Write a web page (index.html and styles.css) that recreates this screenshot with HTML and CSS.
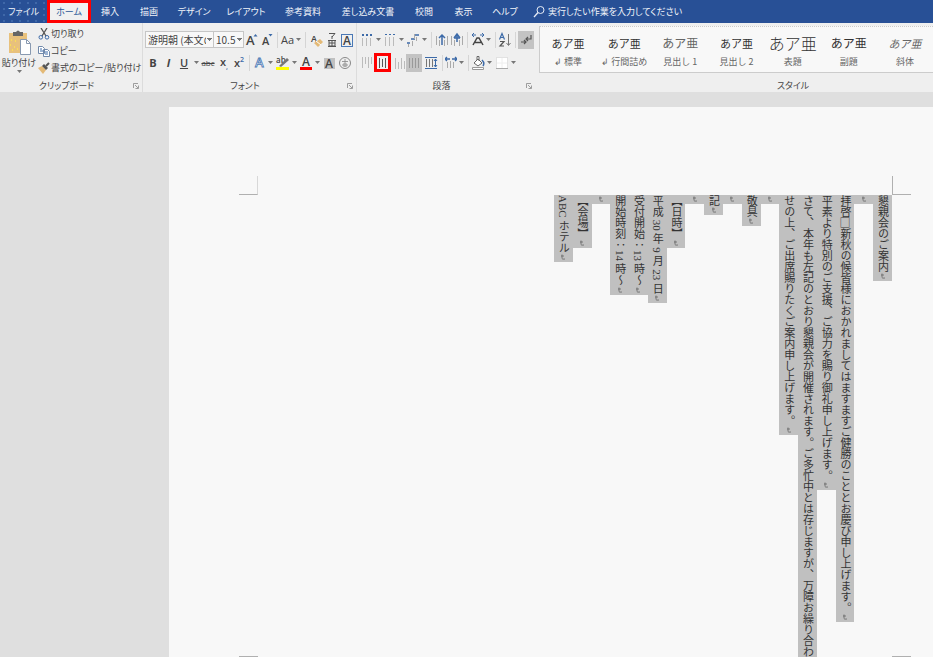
FILE: index.html
```html
<!DOCTYPE html>
<html lang="ja">
<head>
<meta charset="utf-8">
<title>懇親会のご案内</title>
<link rel="stylesheet" href="styles.css">
</head>
<body>
<svg class="defs" aria-hidden="true">
  <symbol id="arrow" viewBox="0 0 5 3"><path d="M0 0h5L2.500 3z" fill="#777"/></symbol>
  <symbol id="mark" viewBox="0 0 18 9"><path d="M7 3h3M8 1.500v4q0 1 3 .5" fill="none" stroke="#666" stroke-width=".8"/></symbol>
  <symbol id="launch" viewBox="0 0 6 6"><path d="M.5 5V.5H5M2 2l3 3M5.500 2.500v3h-3" fill="none" stroke="#888" stroke-width=".8"/></symbol>
</svg>

<nav class="tabs">
  <button class="tab file">ファイル</button>
  <button class="tab active">ホーム</button>
  <button class="tab">挿入</button>
  <button class="tab">描画</button>
  <button class="tab">デザイン</button>
  <button class="tab">レイアウト</button>
  <button class="tab">参考資料</button>
  <button class="tab">差し込み文書</button>
  <button class="tab">校閲</button>
  <button class="tab">表示</button>
  <button class="tab">ヘルプ</button>
  <button class="tab search"><svg width="14" height="14" viewBox="0 0 14 14"><circle cx="8.500" cy="5" r="3.500" fill="none" stroke="#e6ecf6"/><path d="M6 7.500L2 12" stroke="#e6ecf6" stroke-width="1.300"/></svg>実行したい作業を入力してください</button>
</nav>

<div class="ribbon">
  <section class="group clipboard">
    <div class="tools">
      <button class="paste">
        <svg width="26" height="26" viewBox="-2 0 26 26"><path d="M1 3h18v20H1z" fill="#e8c17c"/><path d="M5 2h3q2-3 4 0h3v4H5z" fill="#666"/><path d="M3 10h1M7 11h1M2 15h1M6 17h1M4 20h1M9 19h1" stroke="#ffe94a" stroke-width="1.500"/><path d="M12.500 9.500h6l4 4v11h-10z" fill="#fff" stroke="#8899b0"/><path d="M18.500 9.500v4h4" fill="none" stroke="#8899b0"/></svg>
        <span>貼り付け</span>
        <svg class="down"><use href="#arrow"/></svg>
      </button>
      <div class="clips">
        <button><svg width="12" height="12" viewBox="0 0 12 12"><path d="M3 0l5 8M9 0L4 8" stroke="#555" stroke-width="1.300"/><circle cx="2.800" cy="9.300" r="1.800" fill="none" stroke="#3c6aa8"/><circle cx="9" cy="9.300" r="1.800" fill="none" stroke="#3c6aa8"/></svg>切り取り</button>
        <button><svg width="12" height="12" viewBox="0 0 12 12"><path d="M.5 1.500h4l2 2v5h-6zM5.500 4.500h4l2 2v5h-6z" fill="#fff" stroke="#7189aa"/><path d="M2 4h2M2 6h3M7 7h3M7 9h3" stroke="#3c6aa8"/></svg>コピー</button>
        <button><svg width="12" height="12" viewBox="0 0 12 12"><path d="M0 6l4-2 4 4-3 4z" fill="#e3b976"/><path d="M4 4l2-2 4 4-2 2z" fill="#555"/><path d="M8 4l3-3" stroke="#555" stroke-width="2"/></svg>書式のコピー/貼り付け</button>
      </div>
    </div>
    <footer><span>クリップボード</span><svg class="launch"><use href="#launch"/></svg></footer>
  </section>

  <section class="group font">
    <div class="tools rows">
      <div class="row font-one">
        <select aria-label="フォント"><option>游明朝 (本文のフォント)</option></select>
        <select class="size" aria-label="フォント サイズ"><option>10.5</option></select>
        <button aria-label="拡大"><svg width="14" height="16" viewBox="0 0 14 16"><text x="1" y="13" class="g13">A</text><path d="M8.500 4.500l2-2.500 2 2.500z" fill="#3c6aa8"/></svg></button>
        <button aria-label="縮小"><svg width="14" height="16" viewBox="0 0 14 16"><text x="2" y="13" class="g11">A</text><path d="M8.500 2h4l-2 2.500z" fill="#3c6aa8"/></svg></button>
        <i class="sep"></i>
        <button><span class="aa">Aa</span><svg class="down"><use href="#arrow"/></svg></button>
        <i class="sep"></i>
        <button aria-label="書式のクリア"><svg width="14" height="16" viewBox="0 0 14 16"><text x="1" y="10" class="g9">A</text><path d="M4 11l4 4 5-5-3-3z" fill="#e3b976"/><path d="M6 9l5 4" stroke="#fff"/></svg></button>
        <button aria-label="ルビ"><svg width="14" height="16" viewBox="0 0 14 16"><path d="M4 1.500h6L7 5M7 4v3M3 8.500h8M4 8v6h6V8M4 11h6M3 14.500h8M7 8v6" fill="none" stroke="#555"/></svg></button>
        <button aria-label="囲み線"><svg width="14" height="16" viewBox="0 0 14 16"><rect x="1.500" y="2.500" width="11" height="12" fill="none" stroke="#4a78b5"/><text x="3" y="13" class="g12">A</text></svg></button>
      </div>
      <div class="row font-two">
        <button><b>B</b></button>
        <button><b><em>I</em></b></button>
        <button><u>U</u></button>
        <button aria-label="下線の種類"><svg class="down"><use href="#arrow"/></svg></button>
        <button><s>abc</s></button>
        <button><span class="script">x<sub>,</sub></span></button>
        <button><span class="script">x<sup>2</sup></span></button>
        <i class="sep"></i>
        <button aria-label="文字の効果"><svg width="14" height="16" viewBox="0 0 14 16"><text x="2" y="12" class="outline">A</text></svg></button>
        <button aria-label="効果一覧"><svg class="down"><use href="#arrow"/></svg></button>
        <button aria-label="蛍光ペン"><svg width="15" height="16" viewBox="0 0 15 16"><text x="1" y="8" class="g8">ab</text><path d="M4 11l8-8 2 2-8 7z" fill="#777"/><path d="M1 12h13v3H1z" fill="#ff0"/></svg></button>
        <button aria-label="蛍光ペンの色"><svg class="down"><use href="#arrow"/></svg></button>
        <button aria-label="文字の色"><svg width="14" height="16" viewBox="0 0 14 16"><text x="3" y="11" class="g12">A</text><path d="M1 12h12v3H1z" fill="red"/></svg></button>
        <button aria-label="色一覧"><svg class="down"><use href="#arrow"/></svg></button>
        <button aria-label="網かけ"><svg width="14" height="16" viewBox="0 0 14 16"><path d="M2 3h11v11H2z" fill="#c0c0c0"/><text x="3" y="13" class="g12">A</text></svg></button>
        <button aria-label="囲い文字"><svg width="14" height="16" viewBox="0 0 14 16"><circle cx="7" cy="8" r="5.500" fill="none" stroke="#888"/><path d="M4 6.500h6M7 4v8M5 9h4v2H5z" fill="none" stroke="#888" stroke-width=".8"/></svg></button>
      </div>
    </div>
    <footer><span>フォント</span><svg class="launch"><use href="#launch"/></svg></footer>
  </section>

  <section class="group para">
    <div class="tools rows">
      <div class="row para-one">
        <button aria-label="箇条書き"><svg width="14" height="16" viewBox="0 0 14 16"><path d="M2 3h2M6 3h2M10 3h2" stroke="#3c6aa8" stroke-width="2"/><path d="M2.500 6v8M6.500 6v8M10.500 6v8" stroke="#bbb"/></svg></button>
        <button aria-label="行頭文字"><svg class="down"><use href="#arrow"/></svg></button>
        <button aria-label="段落番号"><svg width="14" height="16" viewBox="0 0 14 16"><path d="M2 2.500h2M6 2.500h2M10 2.500h2" stroke="#3c6aa8"/><path d="M2.500 5v9M6.500 5v9M10.500 5v9" stroke="#bbb"/></svg></button>
        <button aria-label="番号書式"><svg class="down"><use href="#arrow"/></svg></button>
        <button aria-label="リスト"><svg width="14" height="16" viewBox="0 0 14 16"><path d="M9 3h4M5 7h4M1 11h3" stroke="#3c6aa8" stroke-width="1.500"/><path d="M10.500 5v4M6.500 9v5M2.500 12v3M8.500 2v5" stroke="#aaa"/></svg></button>
        <button aria-label="リスト書式"><svg class="down"><use href="#arrow"/></svg></button>
        <i class="sep"></i>
        <button aria-label="インデントを減らす"><svg width="14" height="16" viewBox="0 0 14 16"><path d="M1.500 4v9M4.500 8v6M9.500 8v6M12.500 4v9" stroke="#aaa"/><path d="M7 13V4M4 6l3-3 3 3" stroke="#3c6aa8" stroke-width="1.500" fill="none"/></svg></button>
        <button aria-label="インデントを増やす"><svg width="14" height="16" viewBox="0 0 14 16"><path d="M1.500 4v9M4.500 8v6M9.500 8v6M12.500 4v9" stroke="#aaa"/><path d="M7 2v8M4 6l3-4 3 4M4 6h6" stroke="#3c6aa8" stroke-width="1.500" fill="none"/></svg></button>
        <i class="sep"></i>
        <button aria-label="拡張書式"><svg width="14" height="16" viewBox="0 0 14 16"><path d="M1 3h4M9 3h4M3 1L1 3l2 2M11 1l2 2-2 2" fill="none" stroke="#3c6aa8"/><path d="M2 13l4-7h2l4 7M4 10.500h6" stroke="#444" stroke-width="1.500" fill="none"/></svg></button>
        <button aria-label="拡張書式一覧"><svg class="down"><use href="#arrow"/></svg></button>
        <i class="sep"></i>
        <button aria-label="並べ替え"><svg width="14" height="16" viewBox="0 0 14 16"><path d="M1.500 7.500L4 1.500l2.500 6M2.500 5.500h3" fill="none" stroke="#3c6aa8" stroke-width="1.200"/><path d="M2 9.500h4l-4 4.500h4" fill="none" stroke="#555" stroke-width="1.200"/><path d="M10.500 2v11M8.500 11l2 2.500 2-2.500" fill="none" stroke="#777"/></svg></button>
        <i class="sep"></i>
        <button class="pressed" aria-label="編集記号"><svg width="14" height="16" viewBox="0 0 14 16"><path d="M12 3v4H7M9 5L7 7l2 2M2 10h5M5 8l2 2-2 2" fill="none" stroke="#555" stroke-width="1.200"/></svg></button>
      </div>
      <div class="row para-two">
        <button aria-label="上揃え"><svg width="14" height="16" viewBox="0 0 14 16"><path d="M2.500 2v11M5.500 2v7M8.500 2v11M11.500 2v7" stroke="#bbb"/></svg></button>
        <button class="boxed" aria-label="上下中央揃え"><svg width="11" height="16" viewBox="0 0 11 16"><path d="M2.500 3v10M5.500 4v8M8.500 3v10" stroke="#555"/></svg></button>
        <button aria-label="下揃え"><svg width="14" height="16" viewBox="0 0 14 16"><path d="M3.500 3v11M6.500 7v7M9.500 3v11M12.500 6v8" stroke="#bbb"/></svg></button>
        <button class="pressed" aria-label="両端揃え"><svg width="14" height="16" viewBox="0 0 14 16"><path d="M2.500 3v10M5.500 3v10M8.500 3v10M11.500 3v10" stroke="#999"/></svg></button>
        <button aria-label="均等割り付け"><svg width="14" height="16" viewBox="0 0 14 16"><path d="M1 2.500h12M1 13.500h12M11.500 4v8" stroke="#3c6aa8"/><path d="M2.500 4v8M5.500 4v8M8.500 4v8" stroke="#777"/><path d="M10 6l1.500-2L13 6M10 10l1.500 2 1.500-2" fill="none" stroke="#3c6aa8"/></svg></button>
        <i class="sep"></i>
        <button aria-label="行間"><svg width="12" height="16" viewBox="0 0 12 16"><path d="M0 4h5M7 4h5M2 2L0 4l2 2M10 2l2 2-2 2" fill="none" stroke="#3c6aa8" stroke-width="1.300"/><path d="M2.500 7v6M5.500 6v7M8.500 7v6" stroke="#aaa"/></svg></button>
        <button aria-label="行間一覧"><svg class="down"><use href="#arrow"/></svg></button>
        <i class="sep"></i>
        <button aria-label="塗りつぶし"><svg width="14" height="16" viewBox="0 0 14 16"><path d="M3 8l4-4 4 4-4 3zM6 5V1.500h2V6" fill="#fff" stroke="#666"/><path d="M11 5q3 3 1 6" stroke="#3c6aa8" stroke-width="1.500" fill="none"/><path d="M1.500 12.500h11v2h-11z" fill="#fff" stroke="#999"/></svg></button>
        <button aria-label="塗りつぶしの色"><svg class="down"><use href="#arrow"/></svg></button>
        <button aria-label="罫線"><svg width="14" height="16" viewBox="0 0 14 16"><path d="M1.500 2.500h11v11h-11z" fill="#fff" stroke="#ccc" stroke-dasharray="1 1"/><path d="M7 3v10M2 8h10" stroke="#eee"/><path d="M1 13.500h12" stroke="#aaa"/></svg></button>
        <button aria-label="罫線一覧"><svg class="down"><use href="#arrow"/></svg></button>
      </div>
    </div>
    <footer><span>段落</span><svg class="launch"><use href="#launch"/></svg></footer>
  </section>

  <section class="group styles">
    <div class="gallery">
      <button><span class="sample">あア亜</span><small>↲ 標準</small></button>
      <button><span class="sample">あア亜</span><small>↲ 行間詰め</small></button>
      <button><span class="sample head">あア亜</span><small>見出し 1</small></button>
      <button><span class="sample">あア亜</span><small>見出し 2</small></button>
      <button><span class="sample title">あア亜</span><small>表題</small></button>
      <button><span class="sample sub">あア亜</span><small>副題</small></button>
      <button><span class="sample slant">あア亜</span><small>斜体</small></button>
    </div>
    <footer><span>スタイル</span></footer>
  </section>
</div>

<main class="workspace">
  <article class="page">
    <div class="crops top"><i></i><i></i></div>
    <div class="text">
      <p>懇親会のご案内<svg class="mark"><use href="#mark"/></svg></p>
      <p><svg class="mark"><use href="#mark"/></svg></p>
      <p>拝啓<span class="space">□</span>新秋の候皆様におかれましてはますますご健勝のこととお慶び申し上げます。<svg class="mark"><use href="#mark"/></svg></p>
      <p>平素より特別のご支援、ご協力を賜り御礼申し上げます。<svg class="mark"><use href="#mark"/></svg></p>
      <p>さて、本年も左記のとおり懇親会が開催されます。ご多忙中とは存じますが、万障お繰り合わ</p>
      <p>せの上、ご出席賜りたくご案内申し上げます。<svg class="mark"><use href="#mark"/></svg></p>
      <p><svg class="mark"><use href="#mark"/></svg></p>
      <p>敬具<svg class="mark"><use href="#mark"/></svg></p>
      <p><svg class="mark"><use href="#mark"/></svg></p>
      <p>記<svg class="mark"><use href="#mark"/></svg></p>
      <p><svg class="mark"><use href="#mark"/></svg></p>
      <p>【日時】<svg class="mark"><use href="#mark"/></svg></p>
      <p>平成 30 年 9 月 23 日<svg class="mark"><use href="#mark"/></svg></p>
      <p>受付開始：13 時～<svg class="mark"><use href="#mark"/></svg></p>
      <p>開始時刻：14 時～<svg class="mark"><use href="#mark"/></svg></p>
      <p><svg class="mark"><use href="#mark"/></svg></p>
      <p>【会場】<svg class="mark"><use href="#mark"/></svg></p>
      <p>ABC ホテル<svg class="mark"><use href="#mark"/></svg></p>
    </div>
    <div class="crops bottom"><i></i><i></i></div>
  </article>
</main>
</body>
</html>
```
FILE: styles.css
```css
* { box-sizing: border-box; }

body {
  margin: 0;
  height: 100vh;
  overflow: hidden;
  display: flex;
  flex-direction: column;
  background: #dfdfdf;
  color: #444;
  font: 9px/12px "Noto Sans CJK JP", sans-serif;
  font-feature-settings: "palt";
}

.defs { display: none; }

button {
  margin: 0;
  padding: 0;
  border: 0;
  background: none;
  color: inherit;
  font: inherit;
  font-feature-settings: inherit;
  display: flex;
  align-items: center;
  justify-content: center;
  white-space: nowrap;
}

svg { flex: none; }
.down { width: 5px; height: 3px; }

/* Tab strip */
.tabs {
  flex: none;
  height: 23px;
  display: grid;
  grid-template-columns: 47px 44px 38px 40px 50px 54px 60px 70px 42px 37px 46px 1fr;
  background: #285096;
  color: #f2f5fa;
}
.file {
  background-image: radial-gradient(#3f68a9 1px, transparent 1px);
  background-size: 8px 6px;
}
.active {
  border: 3px solid red;
  background: #f0f0f0;
  color: #2b5797;
}
.search {
  justify-content: flex-start;
  gap: 2px;
  padding-left: 4px;
}

/* Ribbon */
.ribbon {
  flex: none;
  display: flex;
  height: 69px;
  background: #efefef;
}
.group {
  display: flex;
  flex-direction: column;
  justify-content: space-between;
  border-right: 1px solid #dcdcdc;
}
.group footer {
  display: flex;
  align-items: center;
  height: 13px;
  padding-right: 3px;
}
.group footer span { flex: 1; text-align: center; }
.launch { width: 6px; height: 6px; }

.clipboard { width: 143px; }
.clipboard .tools { display: flex; padding-top: 3px; }
.paste {
  flex-direction: column;
  width: 38px;
  height: 50px;
  gap: 1px;
}
.clips {
  display: flex;
  flex-direction: column;
  gap: 5px;
  padding-top: 2px;
}
.clips button { gap: 1px; height: 12px; justify-content: flex-start; }

.rows { padding: 6px 0 0 2px; display: grid; gap: 2px; }
.row { display: grid; height: 21px; align-items: center; }
.row button { height: 18px; }
.font { width: 214px; }
.font-one { grid-template-columns: 69px 30px 15px 15px 6px 22px 7px 15px 15px 15px; }
.font-two { grid-template-columns: 16px 15px 16px 8px 16px 16px 14px 6px 15px 7px 17px 7px 16px 7px 16px 16px; }
.para { width: 179px; border-right: 0; }
.para-one { grid-template-columns: 16px 7px 16px 7px 16px 7px 6px 15px 15px 6px 15px 7px 6px 14px 6px 16px; }
.para-two { grid-template-columns: 15px 17px 15px 16px 17px 6px 12px 9px 4px 16px 7px 17px 7px; }
.para footer { padding-right: 4px; }

.sep { width: 1px; height: 16px; justify-self: center; background: #d5d5d5; }
.pressed { background: #c3c3c3; }
.boxed.boxed { border: 3px solid red; height: 19px; }

select {
  appearance: none;
  width: 100%;
  height: 17px;
  margin: 0;
  padding: 0 7px 0 2px;
  border: 1px solid #c6c6c6;
  border-radius: 0;
  background: #f8f8f8 conic-gradient(from -45deg at 50% 100%, #777 90deg, transparent 0) no-repeat right 1px center / 5px 3px;
  color: #444;
  font: 10px/14px "Noto Sans CJK JP", sans-serif;
}
.size { border-left: 0; }

.g13, .g12, .g11, .g9, .g8 { font-family: "Open Sans", sans-serif; font-weight: 600; fill: #444; }
.g13 { font-size: 13px; }
.g12 { font-size: 12px; }
.g11 { font-size: 11px; }
.g9 { font-size: 9px; }
.g8 { font-size: 8px; }
.outline { font: 600 13px "Open Sans", sans-serif; fill: #fff; stroke: #4a78b5; stroke-width: .8px; }
.aa { font: 11px/14px "Open Sans", sans-serif; margin-right: 2px; }
b, u { font: 700 11px/14px "Open Sans", sans-serif; }
u { font-weight: 600; }
s { font: 8px/12px "Open Sans", sans-serif; }
.script { font: 600 11px/14px "Open Sans", sans-serif; }
.script sub, .script sup { font-size: 7px; line-height: 1; color: #3c6aa8; }

/* Style gallery */
.styles { flex: 1; border-right: 0; padding: 3px 0 0 3px; }
.gallery {
  display: flex;
  height: 47px;
  border: 1px solid #ccc;
  border-top-style: dotted;
  border-right: 0;
  background: #f8f8f8;
}
.gallery button { flex: 1; flex-direction: column; gap: 3px; padding-top: 3px; }
.sample { font-size: 11px; line-height: 18px; font-feature-settings: normal; color: #333; }
.head { font-size: 12px; color: #666; }
.title { font-size: 16px; font-weight: 300; }
.sub { font-size: 12px; }
.slant { font-style: italic; color: #666; }
small { font-size: 9px; line-height: 14px; color: #666; font-feature-settings: normal; }
.styles footer { padding: 0 0 0 114px; }

/* Document */
.workspace { flex: 1; padding: 15px 0 0 169px; }
.page {
  display: flex;
  flex-direction: column;
  padding: 69px 22px 0 70px;
  background: #f8f8f8;
}
.crops { display: flex; justify-content: space-between; }
.crops i { width: 19px; height: 19px; border: 0 solid #b0b0b0; }
.top i { border-bottom-width: 1px; }
.top i:first-child { border-right: 1px solid #d8d8d8; }
.top i:last-child { border-left-width: 1px; }
.bottom { margin-top: -1px; }
.bottom i { border-top-width: 1px; }

.text {
  display: flex;
  flex-direction: row-reverse;
  align-items: flex-start;
  align-self: flex-end;
  width: 338px;
  margin-right: 19px;
}
.text p {
  flex: 1;
  display: flex;
  align-items: center;
  margin: 0;
  background: #c0c0c0;
  color: #333;
  writing-mode: vertical-rl;
  white-space: nowrap;
  font: 11px/18px "Liberation Serif", "Noto Sans CJK JP", serif;
  font-feature-settings: normal;
}
.text .space { font-family: "Noto Sans CJK JP", sans-serif; }
.mark { width: 18px; height: 9px; }
```
